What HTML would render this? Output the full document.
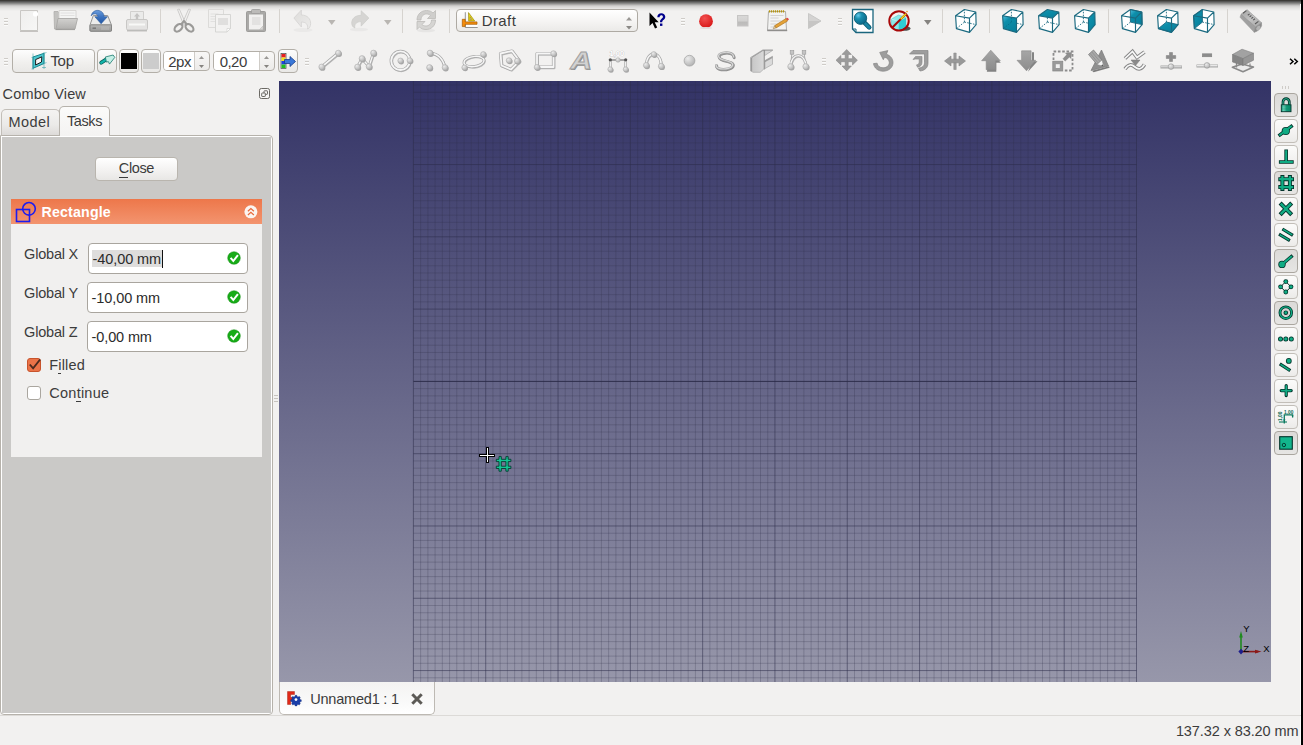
<!DOCTYPE html>
<html><head><meta charset="utf-8"><title>FreeCAD</title>
<style>
html,body{margin:0;padding:0;background:#f2f1f0;}
body{width:1303px;height:745px;overflow:hidden;font-family:"Liberation Sans",sans-serif;}
#root{position:relative;width:1303px;height:745px;overflow:hidden;background:#f2f1f0;}
.t{position:absolute;white-space:nowrap;font-family:"Liberation Sans",sans-serif;}
.a{position:absolute;}
svg{position:absolute;overflow:visible;}
.btn{position:absolute;box-sizing:border-box;border:1px solid #b3afa8;border-radius:4px;background:linear-gradient(#fdfdfd,#f0efed 60%,#e9e8e6);}
.btnc{position:absolute;box-sizing:border-box;border:1px solid #aaa69f;border-radius:4px;background:linear-gradient(#dcdad8,#e6e5e3);}
.sep{position:absolute;width:1px;background:#d6d3cf;}
.hd{position:absolute;width:4px;height:1px;background:#cfccc8;}
.inp{position:absolute;box-sizing:border-box;border:1px solid #a9a59e;border-radius:4px;background:#fff;}
</style></head><body><div id="root">
<div class="a" style="left:0;top:0px;width:1303px;height:1px;background:#3c3b37"></div><div class="a" style="left:0;top:1px;width:1303px;height:1px;background:#555553"></div><div class="a" style="left:0;top:2px;width:1303px;height:1px;background:#70706e"></div><div class="a" style="left:0;top:3px;width:1303px;height:1px;background:#8b8b89"></div><div class="a" style="left:0;top:4px;width:1303px;height:1px;background:#a9a8a6"></div><div class="a" style="left:0;top:5px;width:1303px;height:1px;background:#c5c4c2"></div><div class="a" style="left:0;top:6px;width:1303px;height:1px;background:#d6d5d3"></div><div class="a" style="left:0;top:7px;width:1303px;height:1px;background:#dfdedc"></div><div class="a" style="left:0;top:8px;width:1303px;height:1px;background:#e6e5e3"></div><div class="a" style="left:0;top:9px;width:1303px;height:1px;background:#ebeae8"></div><div class="a" style="left:0;top:10px;width:1303px;height:1px;background:#efeeed"></div>
<div class="a" style="left:1300px;top:4px;width:1px;height:741px;background:#fdfdfd"></div>
<div class="a" style="left:1301px;top:0;width:2px;height:745px;background:#000"></div>
<div class="a" style="left:279px;top:81px;width:992px;height:601px;overflow:hidden;background:linear-gradient(#333366,#9797aa)">
<svg width="992" height="601" viewBox="279 81 992 601" style="left:0;top:0"><path d="M420.63 79 V684 M427.86 79 V684 M435.09 79 V684 M442.32 79 V684 M449.55 79 V684 M456.79 79 V684 M464.02 79 V684 M471.25 79 V684 M478.48 79 V684 M492.94 79 V684 M500.17 79 V684 M507.40 79 V684 M514.63 79 V684 M521.87 79 V684 M529.10 79 V684 M536.33 79 V684 M543.56 79 V684 M550.79 79 V684 M565.25 79 V684 M572.48 79 V684 M579.71 79 V684 M586.94 79 V684 M594.17 79 V684 M601.41 79 V684 M608.64 79 V684 M615.87 79 V684 M623.10 79 V684 M637.56 79 V684 M644.79 79 V684 M652.02 79 V684 M659.25 79 V684 M666.49 79 V684 M673.72 79 V684 M680.95 79 V684 M688.18 79 V684 M695.41 79 V684 M709.87 79 V684 M717.10 79 V684 M724.33 79 V684 M731.56 79 V684 M738.79 79 V684 M746.03 79 V684 M753.26 79 V684 M760.49 79 V684 M767.72 79 V684 M782.18 79 V684 M789.41 79 V684 M796.64 79 V684 M803.87 79 V684 M811.11 79 V684 M818.34 79 V684 M825.57 79 V684 M832.80 79 V684 M840.03 79 V684 M854.49 79 V684 M861.72 79 V684 M868.95 79 V684 M876.18 79 V684 M883.41 79 V684 M890.65 79 V684 M897.88 79 V684 M905.11 79 V684 M912.34 79 V684 M926.80 79 V684 M934.03 79 V684 M941.26 79 V684 M948.49 79 V684 M955.73 79 V684 M962.96 79 V684 M970.19 79 V684 M977.42 79 V684 M984.65 79 V684 M999.11 79 V684 M1006.34 79 V684 M1013.57 79 V684 M1020.80 79 V684 M1028.03 79 V684 M1035.27 79 V684 M1042.50 79 V684 M1049.73 79 V684 M1056.96 79 V684 M1071.42 79 V684 M1078.65 79 V684 M1085.88 79 V684 M1093.11 79 V684 M1100.34 79 V684 M1107.58 79 V684 M1114.81 79 V684 M1122.04 79 V684 M1129.27 79 V684 M413.40 85.01 H1136.50 M413.40 99.47 H1136.50 M413.40 106.70 H1136.50 M413.40 113.93 H1136.50 M413.40 121.16 H1136.50 M413.40 128.38 H1136.50 M413.40 135.61 H1136.50 M413.40 142.84 H1136.50 M413.40 150.07 H1136.50 M413.40 157.30 H1136.50 M413.40 171.76 H1136.50 M413.40 178.99 H1136.50 M413.40 186.22 H1136.50 M413.40 193.45 H1136.50 M413.40 200.67 H1136.50 M413.40 207.90 H1136.50 M413.40 215.13 H1136.50 M413.40 222.36 H1136.50 M413.40 229.59 H1136.50 M413.40 244.05 H1136.50 M413.40 251.28 H1136.50 M413.40 258.51 H1136.50 M413.40 265.74 H1136.50 M413.40 272.96 H1136.50 M413.40 280.19 H1136.50 M413.40 287.42 H1136.50 M413.40 294.65 H1136.50 M413.40 301.88 H1136.50 M413.40 316.34 H1136.50 M413.40 323.57 H1136.50 M413.40 330.80 H1136.50 M413.40 338.03 H1136.50 M413.40 345.25 H1136.50 M413.40 352.48 H1136.50 M413.40 359.71 H1136.50 M413.40 366.94 H1136.50 M413.40 374.17 H1136.50 M413.40 388.63 H1136.50 M413.40 395.86 H1136.50 M413.40 403.09 H1136.50 M413.40 410.32 H1136.50 M413.40 417.54 H1136.50 M413.40 424.77 H1136.50 M413.40 432.00 H1136.50 M413.40 439.23 H1136.50 M413.40 446.46 H1136.50 M413.40 460.92 H1136.50 M413.40 468.15 H1136.50 M413.40 475.38 H1136.50 M413.40 482.61 H1136.50 M413.40 489.83 H1136.50 M413.40 497.06 H1136.50 M413.40 504.29 H1136.50 M413.40 511.52 H1136.50 M413.40 518.75 H1136.50 M413.40 533.21 H1136.50 M413.40 540.44 H1136.50 M413.40 547.67 H1136.50 M413.40 554.90 H1136.50 M413.40 562.12 H1136.50 M413.40 569.35 H1136.50 M413.40 576.58 H1136.50 M413.40 583.81 H1136.50 M413.40 591.04 H1136.50 M413.40 605.50 H1136.50 M413.40 612.73 H1136.50 M413.40 619.96 H1136.50 M413.40 627.19 H1136.50 M413.40 634.41 H1136.50 M413.40 641.64 H1136.50 M413.40 648.87 H1136.50 M413.40 656.10 H1136.50 M413.40 663.33 H1136.50 M413.40 677.79 H1136.50" stroke="#2d2d48" stroke-opacity="0.24" stroke-width="1" fill="none"/><path d="M413.40 79 V684 M485.71 79 V684 M558.02 79 V684 M630.33 79 V684 M702.64 79 V684 M774.95 79 V684 M847.26 79 V684 M919.57 79 V684 M991.88 79 V684 M1064.19 79 V684 M1136.50 79 V684 M413.40 92.24 H1136.50 M413.40 164.53 H1136.50 M413.40 236.82 H1136.50 M413.40 309.11 H1136.50 M413.40 453.69 H1136.50 M413.40 525.98 H1136.50 M413.40 598.27 H1136.50 M413.40 670.56 H1136.50" stroke="#2d2d48" stroke-opacity="0.52" stroke-width="1" fill="none"/><path d="M413.40 381.40 H1136.50" stroke="#2a2a46" stroke-opacity="0.92" stroke-width="1" fill="none"/><path d="M486 447h3v7h6v3h-6v6h-3v-6h-7v-3h7z" fill="#000"/><path d="M487 448h1v7h6v1h-6v6h-1v-6h-7v-1h7z" fill="#fff"/><g transform="translate(496.300,456.600)"><path d="M2.700 0h2.300v2.700h4.600v-2.700h2.300v2.700h2.700v2.300h-2.700v4.600h2.700v2.300h-2.700v2.700h-2.300v-2.700h-4.600v2.700h-2.300v-2.700h-2.700v-2.300h2.700v-4.600h-2.700v-2.300h2.700z M5 5v4.600h4.600v-4.600z" fill="#14c494" stroke="#053c30" stroke-width="0.900" fill-rule="evenodd"/></g><g><path d="M1241 651.5V634" stroke="#1f8a1f" stroke-width="1.6"/><path d="M1239.2 637.5L1241 631l1.800 6.500z" fill="#1f8a1f"/><path d="M1241 651.600H1258" stroke="#8b1a1a" stroke-width="1.600"/><path d="M1255 649.800l6.500 1.800-6.500 1.800z" fill="#8b1a1a"/><path d="M1241 648.800l2.600 2.800-2.600 2.800-2.600-2.800z" fill="#1c1c8c"/><g font-family="Liberation Sans" font-size="9.500" fill="#000"><text x="1243.300" y="632">Y</text><text x="1243.300" y="652">Z</text><text x="1263.200" y="652">X</text></g></g></svg>
</div>
<span class="t" style="left:2.60px;top:83.78px;font-size:14.50px;line-height:20px;letter-spacing:0.146px;color:#3c3c3c;">Combo View</span>
<svg width="12" height="12" style="left:259px;top:88px" viewBox="0 0 12 12"><rect x="0.500" y="0.500" width="10" height="10" rx="1.800" fill="#f7f6f5" stroke="#6b6964" stroke-width="1"/><rect x="5" y="2.800" width="3.500" height="3.500" rx="0.500" fill="none" stroke="#6b6964" stroke-width="1"/><rect x="2.700" y="5" width="3.600" height="3.500" rx="0.500" fill="#f7f6f5" stroke="#6b6964" stroke-width="1"/></svg>
<div class="a" style="left:0;top:135px;width:273px;height:580px;box-sizing:border-box;border:1px solid #b6b2ab;border-radius:0 4px 4px 4px;background:#fff"></div>
<div class="a" style="left:2px;top:137px;width:269px;height:576px;background:#cac9c7"></div>
<div class="a" style="left:1px;top:109px;width:59px;height:27px;box-sizing:border-box;border:1px solid #c2beb8;border-bottom:1px solid #b6b2ab;border-radius:5px 5px 0 0;background:linear-gradient(#f4f3f2,#ebeae8 60%,#dddbd9)"></div>
<div class="a" style="left:59px;top:106px;width:51px;height:30px;box-sizing:border-box;border:1px solid #b6b2ab;border-bottom:none;border-radius:5px 5px 0 0;background:linear-gradient(#fbfbfa,#f4f3f2)"></div>
<span class="t" style="left:8.60px;top:111.68px;font-size:14.50px;line-height:20px;letter-spacing:0.381px;color:#3c3c3c;">Model</span>
<span class="t" style="left:67.00px;top:111.18px;font-size:14.50px;line-height:20px;letter-spacing:-0.413px;color:#3c3c3c;">Tasks</span>
<div class="btn" style="left:95px;top:157px;width:83px;height:24px;border-color:#b9b5ae;background:linear-gradient(#ffffff,#f3f2f1 55%,#e8e7e5)"></div>
<span class="t" style="left:118.80px;top:158.48px;font-size:14.50px;line-height:20px;letter-spacing:-0.374px;color:#3c3c3c;">Close</span>
<div class="a" style="left:119px;top:177px;width:9px;height:1px;background:#3c3c3c"></div>
<div class="a" style="left:11px;top:199px;width:251px;height:258px;background:#f1f0ef"></div>
<div class="a" style="left:11px;top:199px;width:251px;height:25px;background:linear-gradient(#ed774a,#f3946f)"></div>
<svg width="24" height="24" style="left:14px;top:200px" viewBox="14 200 24 24"><rect x="16.500" y="209.500" width="13" height="12" fill="none" stroke="#1c1cf0" stroke-width="1.600"/><circle cx="29" cy="208.800" r="6.300" fill="none" stroke="#1c1cf0" stroke-width="1.600"/></svg>
<span class="t" style="left:41.50px;top:202.28px;font-size:14.20px;line-height:20px;letter-spacing:0.181px;color:#ffffff;font-weight:bold;">Rectangle</span>
<svg width="16" height="16" style="left:243px;top:204px" viewBox="243 204 16 16"><circle cx="250.900" cy="211.800" r="6.500" fill="#fbf4f0"/><path d="M247.900 211.300l3-2.700 3 2.700M247.900 215l3-2.700 3 2.700" fill="none" stroke="#e8693a" stroke-width="1.200"/></svg>
<span class="t" style="left:24.10px;top:244.28px;font-size:14.50px;line-height:20px;letter-spacing:-0.202px;color:#3c3c3c;">Global X</span>
<span class="t" style="left:24.10px;top:282.98px;font-size:14.50px;line-height:20px;letter-spacing:-0.194px;color:#3c3c3c;">Global Y</span>
<span class="t" style="left:24.10px;top:321.98px;font-size:14.50px;line-height:20px;letter-spacing:-0.200px;color:#3c3c3c;">Global Z</span>
<div class="inp" style="left:88px;top:243px;width:160px;height:31px"></div>
<div class="inp" style="left:87px;top:282px;width:161px;height:31px"></div>
<div class="inp" style="left:87px;top:321px;width:161px;height:31px"></div>
<div class="a" style="left:92px;top:250px;width:70px;height:17px;background:#dedddc"></div>
<span class="t" style="left:92.60px;top:248.58px;font-size:14.50px;line-height:20px;letter-spacing:-0.100px;color:#2b2b2b;">-40,00 mm</span>
<div class="a" style="left:162px;top:250px;width:1px;height:18px;background:#111"></div>
<span class="t" style="left:91.60px;top:287.58px;font-size:14.50px;line-height:20px;letter-spacing:-0.100px;color:#2b2b2b;">-10,00 mm</span>
<span class="t" style="left:91.60px;top:326.58px;font-size:14.50px;line-height:20px;letter-spacing:-0.130px;color:#2b2b2b;">-0,00 mm</span>
<svg width="14" height="14" style="left:227.3px;top:251.4px" viewBox="0 0 14 14"><circle cx="7" cy="7" r="6.300" fill="#18ac18"/><circle cx="7" cy="7" r="6.300" fill="none" stroke="#0f8a0f" stroke-width="0.500"/><path d="M3.600 6.900l2.700 3.100 4.600-5.900" fill="none" stroke="#fff" stroke-width="2" stroke-linejoin="miter"/></svg>
<svg width="14" height="14" style="left:227.3px;top:290.4px" viewBox="0 0 14 14"><circle cx="7" cy="7" r="6.300" fill="#18ac18"/><circle cx="7" cy="7" r="6.300" fill="none" stroke="#0f8a0f" stroke-width="0.500"/><path d="M3.600 6.900l2.700 3.100 4.600-5.900" fill="none" stroke="#fff" stroke-width="2" stroke-linejoin="miter"/></svg>
<svg width="14" height="14" style="left:227.3px;top:329.4px" viewBox="0 0 14 14"><circle cx="7" cy="7" r="6.300" fill="#18ac18"/><circle cx="7" cy="7" r="6.300" fill="none" stroke="#0f8a0f" stroke-width="0.500"/><path d="M3.600 6.900l2.700 3.100 4.600-5.900" fill="none" stroke="#fff" stroke-width="2" stroke-linejoin="miter"/></svg>
<svg width="16" height="16" style="left:26px;top:357px" viewBox="26 357 16 16"><rect x="27.500" y="358.500" width="13" height="13" rx="2.500" fill="#ea7348" stroke="#c8542c" stroke-width="1"/><path d="M29.800 364.500l3.300 3.800 7-8.800" fill="none" stroke="#4a2a1e" stroke-width="1.900"/></svg>
<svg width="16" height="16" style="left:26px;top:385px" viewBox="26 385 16 16"><rect x="27.500" y="386.500" width="13" height="13" rx="2.500" fill="#fff" stroke="#aaa69f" stroke-width="1"/></svg>
<span class="t" style="left:49.30px;top:354.78px;font-size:14.50px;line-height:20px;letter-spacing:0.175px;color:#3c3c3c;">Filled</span>
<div class="a" style="left:58px;top:373px;width:3px;height:1px;background:#3c3c3c"></div>
<span class="t" style="left:49.30px;top:382.58px;font-size:14.50px;line-height:20px;letter-spacing:0.244px;color:#3c3c3c;">Continue</span>
<div class="a" style="left:76px;top:401px;width:5px;height:1px;background:#3c3c3c"></div>
<div class="a" style="left:274px;top:395px;width:4px;height:1px;background:#c6c3be"></div><div class="a" style="left:274px;top:398px;width:4px;height:1px;background:#c6c3be"></div><div class="a" style="left:274px;top:401px;width:4px;height:1px;background:#c6c3be"></div>
<div class="hd" style="left:4px;top:18px"></div><div class="hd" style="left:4px;top:19px;background:#fbfbfa"></div><div class="hd" style="left:4px;top:21px"></div><div class="hd" style="left:4px;top:22px;background:#fbfbfa"></div><div class="hd" style="left:4px;top:24px"></div><div class="hd" style="left:4px;top:25px;background:#fbfbfa"></div>
<svg width="24" height="26" viewBox="0 0 24 26" style="left:18px;top:8px"><defs><linearGradient id="gnew" x1="0" y1="0" x2="1" y2="1"><stop offset="0" stop-color="#efeeed"/><stop offset="1" stop-color="#f7f7f6"/></linearGradient></defs><path d="M2.500 2.500h17v20h-17z" fill="url(#gnew)" stroke="#c9c7c4" stroke-width="1"/><path d="M2 23.300h18" stroke="#b9b7b4" stroke-width="1"/><circle cx="17.500" cy="6" r="2.600" fill="#fff"/></svg>
<svg width="28" height="24" viewBox="0 0 28 24" style="left:51px;top:8px"><path d="M3 3.500h4l1 1.500h3v16h-7.500z" fill="#c2c1bf" stroke="#aeadab" stroke-width="0.800"/><path d="M8 2.500h17v9h-17z" fill="#f4f4f3" stroke="#cfcecc" stroke-width="0.800"/><path d="M9.500 5h14M9.500 7.500h14" stroke="#dcdbd9" stroke-width="0.800"/><defs><linearGradient id="gfo" x1="0" y1="0" x2="0" y2="1"><stop offset="0" stop-color="#d2d1cf"/><stop offset="1" stop-color="#b2b1af"/></linearGradient></defs><path d="M7 10.500h19.500l-2.500 10.500h-19z" fill="url(#gfo)" stroke="#a9a8a6" stroke-width="0.900"/><path d="M4.500 21.600h19.500" stroke="#9c9b99" stroke-width="1"/></svg>
<svg width="26" height="26" viewBox="0 0 26 26" style="left:88px;top:8px"><defs><linearGradient id="gsv" x1="0" y1="0" x2="0" y2="1"><stop offset="0" stop-color="#6a9cdc"/><stop offset="0.500" stop-color="#3a72c0"/><stop offset="1" stop-color="#2458a4"/></linearGradient><linearGradient id="gsd" x1="0" y1="0" x2="0" y2="1"><stop offset="0" stop-color="#b6b6b5"/><stop offset="1" stop-color="#9a9a99"/></linearGradient></defs><path d="M5.300 7.500h14.400l3.800 9.500v5.800h-21.500v-5.800z" fill="#dcdcdb" stroke="#969695" stroke-width="1"/><path d="M6 8.500h13l3.200 8.200h-19.400z" fill="#ececeb"/><rect x="2" y="16.800" width="21.500" height="6.500" rx="1" fill="url(#gsd)" stroke="#858584" stroke-width="1"/><path d="M4.500 20.200h3.500" stroke="#777776" stroke-width="1.500"/><path d="M14 18.500v3.500M16 18.500v3.500M18 18.500v3.500M20 18.500v3.500" stroke="#c4c4c3" stroke-width="0.700"/><path d="M3.200 7.800C4 3.500 8 1.800 11 2.500C14.500 3.300 16 6 16.200 8.700L19.400 8.700L13.100 15.800L6.800 8.700L10 8.700C9.800 7 8.500 5.800 7 5.800C5.500 5.800 4 6.600 3.200 7.800Z" fill="url(#gsv)" stroke="#2c5a9c" stroke-width="0.600" stroke-linejoin="round"/></svg>
<svg width="26" height="24" viewBox="0 0 26 24" style="left:124px;top:9px"><path d="M6.500 2.500h13v9h-13z" fill="#ebebea" stroke="#cdcccb" stroke-width="0.900"/><path d="M13 4l3 3.500h-1.800v3h-2.400v-3h-1.800z" fill="#c4c3c2"/><path d="M4 10.500h18q1.500 0 1.500 1.500v7.500q0 1.500-1.500 1.500h-18q-1.500 0-1.500-1.500v-7.500q0-1.500 1.500-1.500z" fill="#e4e3e2" stroke="#c4c3c1" stroke-width="0.900"/><path d="M5 15.500h16" stroke="#f8f8f7" stroke-width="2"/><path d="M3 21.800h20" stroke="#b5b4b2" stroke-width="1.200"/></svg>
<div class="sep" style="left:160px;top:9px;height:24px"></div>
<svg width="24" height="26" viewBox="0 0 24 26" style="left:172px;top:8px"><path d="M5.500 1.500l1.800-.5 6.200 14-2 1.500z" fill="#f1f0ef" stroke="#c4c3c1" stroke-width="0.800"/><path d="M18.500 1.500l-1.800-.5-6.200 14 2 1.500z" fill="#f1f0ef" stroke="#c4c3c1" stroke-width="0.800"/><ellipse cx="6.500" cy="19.800" rx="2.900" ry="4.600" transform="rotate(48 6.500 19.800)" fill="none" stroke="#9b9a98" stroke-width="2.200"/><ellipse cx="17.500" cy="19.800" rx="2.900" ry="4.600" transform="rotate(-48 17.500 19.800)" fill="none" stroke="#9b9a98" stroke-width="2.200"/><path d="M9 16.500l3-3.500 3 3.500" fill="none" stroke="#9b9a98" stroke-width="2"/></svg>
<svg width="26" height="26" viewBox="0 0 26 26" style="left:207px;top:8px"><path d="M1.500 1.500h15v18h-15z" fill="#f1f0ef" stroke="#d9d8d6" stroke-width="0.900"/><path d="M3.500 6h8M3.500 8.500h8M3.500 11h8M3.500 13.500h8" stroke="#dddcdb" stroke-width="0.800"/><path d="M8.500 6.500h15v14l-3.500 3.500h-11.500z" fill="#f3f2f1" stroke="#d3d2d0" stroke-width="0.900"/><rect x="11" y="10" width="10" height="7" fill="#e0dfde"/><path d="M23.500 20.500h-3.500v3.500z" fill="#fff" stroke="#d3d2d0" stroke-width="0.700"/></svg>
<svg width="24" height="26" viewBox="0 0 24 26" style="left:244px;top:8px"><rect x="2.500" y="3.500" width="19" height="20" rx="1" fill="#aaa9a7" stroke="#9d9c9a" stroke-width="1"/><rect x="7.500" y="1.500" width="9" height="4" rx="1" fill="#bcbbb9" stroke="#9d9c9a" stroke-width="0.800"/><path d="M5 6.500h14v15h-14z" fill="#f1f0ef"/><rect x="8" y="9" width="8.500" height="8" fill="#e3e2e1"/><path d="M19 18l-3.500 3.500h3.500z" fill="#d8d7d5" stroke="#b8b7b5" stroke-width="0.500"/></svg>
<div class="sep" style="left:279px;top:9px;height:24px"></div>
<svg width="24" height="26" viewBox="0 0 24 26" style="left:291px;top:8px"><defs><linearGradient id="gun" x1="0" y1="0" x2="1" y2="1"><stop offset="0" stop-color="#dedddb"/><stop offset="1" stop-color="#ecebea"/></linearGradient></defs><ellipse cx="12" cy="22" rx="9.500" ry="2" fill="#eae9e8"/><path transform="translate(2.900,0) scale(0.880,1) translate(-2.500,0)" d="M2.500 10l8.500-8v5c7 0 10.500 4 10.500 8.500 0 3-1.500 5-3.500 5.500 1-4.500-2-7-7-7v5z" fill="url(#gun)" stroke="#d3d2d0" stroke-width="0.800"/></svg>
<svg width="7.5" height="5" viewBox="0 0 7.5 5" style="left:327.55px;top:20px"><path d="M0 0H7.5 L3.75 5z" fill="#b9b6b2"/></svg>
<svg width="24" height="26" viewBox="0 0 24 26" style="left:348px;top:8px"><ellipse cx="11" cy="21.500" rx="9" ry="1.800" fill="#e9e8e7"/><path transform="translate(1.500,1) scale(0.900)" d="M21.500 10l-8.500-8v5c-7 0-10.500 4-10.500 8.500 0 3 1.500 5 3.500 5.500-1-4.500 2-7 7-7v5z" fill="#d6d5d3" stroke="#cccbc9" stroke-width="0.800"/></svg>
<svg width="7.5" height="5" viewBox="0 0 7.5 5" style="left:383.75px;top:20px"><path d="M0 0H7.5 L3.75 5z" fill="#b9b6b2"/></svg>
<div class="sep" style="left:402px;top:9px;height:24px"></div>
<svg width="24" height="26" viewBox="0 0 24 26" style="left:414px;top:8px"><ellipse cx="12" cy="22.500" rx="9" ry="1.800" fill="#e6e5e4"/><path d="M3 12c0-6 4.500-9.500 9.500-9.500 3 0 5 1 6.500 2.500l2.500-2.500v8h-8l3-3c-1-1-2.500-1.500-4-1.500-3 0-5.500 2.500-5.500 6z" fill="#cfcecc" stroke="#bcbbb9" stroke-width="0.800"/><path d="M21.500 12c0 6-4.500 9.500-9.500 9.500-3 0-5-1-6.500-2.500l-2.500 2.500v-8h8l-3 3c1 1 2.500 1.500 4 1.500 3 0 5.500-2.500 5.500-6z" fill="#d6d5d3" stroke="#bcbbb9" stroke-width="0.800"/></svg>
<div class="sep" style="left:449px;top:9px;height:24px"></div>
<div class="btn" style="left:456px;top:9px;width:182px;height:23px;border-color:#aeaaa3;background:linear-gradient(#ffffff,#f6f5f4 50%,#ebeae8)"></div>
<svg width="18" height="18" viewBox="0 0 18 18" style="left:461px;top:11px"><path d="M4.300 1.200V16.500H16.700" fill="none" stroke="#8a8a88" stroke-width="0.900"/><path d="M5 13.600H16.700V15.800H5z" fill="#fff"/><path d="M7.500 1.600L13.700 10H7.700z" fill="#ecd818" stroke="#9a8a10" stroke-width="0.700" stroke-linejoin="round"/><path d="M9 5.800l2.200 3h-2.200z" fill="#c8c0a0" stroke="#9a8a10" stroke-width="0.500"/><path d="M1.300 8.300h2.900v2.600h11.800v2.400h-11.800v2.300h-2.900z" fill="#f48c0c" stroke="#a85c00" stroke-width="0.700" stroke-linejoin="round"/></svg>
<span class="t" style="left:481.70px;top:9.80px;font-size:15.00px;line-height:21px;letter-spacing:0.419px;color:#3c3c3c;">Draft</span>
<svg width="6" height="3.5" viewBox="0 0 6 3.5" style="left:625.5px;top:17px"><path d="M0 3.500L3 0 6 3.500z" fill="#9a9895"/></svg>
<svg width="6" height="3.5" viewBox="0 0 6 3.5" style="left:625.5px;top:25.5px"><path d="M0 0L3 3.500 6 0z" fill="#8a8885"/></svg>
<svg width="20" height="20" viewBox="0 0 20 20" style="left:648px;top:11px"><path d="M1.500 1.500v13.500l3-3 2.500 5.500 2.200-1-2.500-5.200h4z" fill="#000"/><path d="M9.300 6.200c0-2.500 1.800-4 4-4s4 1.500 4 3.600c0 2-1.300 2.700-2.300 3.500-.6.500-.7 1-.7 2h-2.300c0-1.700.3-2.600 1.400-3.400.9-.7 1.500-1.100 1.500-2.100 0-.9-.6-1.600-1.600-1.600s-1.700.8-1.700 2z" fill="#00008c"/><rect x="12" y="12.500" width="2.400" height="2.400" fill="#00008c"/></svg>
<div class="hd" style="left:681px;top:18px"></div><div class="hd" style="left:681px;top:19px;background:#fbfbfa"></div><div class="hd" style="left:681px;top:21px"></div><div class="hd" style="left:681px;top:22px;background:#fbfbfa"></div><div class="hd" style="left:681px;top:24px"></div><div class="hd" style="left:681px;top:25px;background:#fbfbfa"></div>
<svg width="16" height="16" viewBox="0 0 16 16" style="left:698px;top:13px"><defs><radialGradient id="grec" cx="0.400" cy="0.300" r="0.700"><stop offset="0" stop-color="#f25050"/><stop offset="1" stop-color="#d81818"/></radialGradient></defs><circle cx="8" cy="8.200" r="6.900" fill="url(#grec)"/><ellipse cx="8" cy="15" rx="6" ry="1" fill="#e4dcdc"/></svg>
<svg width="14" height="14" viewBox="0 0 14 14" style="left:736px;top:14px"><defs><linearGradient id="gst" x1="0" y1="0" x2="0" y2="1"><stop offset="0" stop-color="#d9d8d7"/><stop offset="0.550" stop-color="#d2d1d0"/><stop offset="0.600" stop-color="#bbbab9"/><stop offset="1" stop-color="#c2c1c0"/></linearGradient></defs><rect x="1.500" y="1.500" width="10.500" height="10.500" fill="url(#gst)" stroke="#c6c5c4" stroke-width="1"/></svg>
<svg width="24" height="24" viewBox="0 0 24 24" style="left:766px;top:9px"><path d="M2.500 2.500h17l1 18.500h-19z" fill="#f3f3f2" stroke="#a7a6a4" stroke-width="0.900"/><path d="M1.200 21.500h20" stroke="#8f8e8c" stroke-width="1.400"/><path d="M4.500 6.500h13M4.500 9h8M4.500 12h11M4.500 15h9M4.500 18h6" stroke="#cfcecd" stroke-width="0.900"/><path d="M3.500 1.200v2.300M5.500 1.200v2.300M7.500 1.200v2.300M9.500 1.200v2.300M11.500 1.200v2.300M13.500 1.200v2.300M15.500 1.200v2.300M17.500 1.200v2.300" stroke="#b8960c" stroke-width="1.200"/><path d="M8.500 16.800l11.500-7.300 1.600 2.500-11.600 7z" fill="#e4a238" stroke="#a56a14" stroke-width="0.600"/><path d="M8.500 16.800l1.500 2.200-2.900.9z" fill="#e9cfa0" stroke="#8c6a34" stroke-width="0.400"/><path d="M20 9.500l1.200-.8q1.500.4 1.700 2l-1.300.8z" fill="#e04040"/></svg>
<svg width="16" height="18" viewBox="0 0 16 18" style="left:807px;top:12px"><path d="M1.500 1.500v15l12.500-7.500z" fill="#d4d3d2" stroke="#c2c1c0" stroke-width="0.800"/><path d="M1.500 9v7.500l12.500-7.500z" fill="#c6c5c4"/></svg>
<div class="hd" style="left:838px;top:18px"></div><div class="hd" style="left:838px;top:19px;background:#fbfbfa"></div><div class="hd" style="left:838px;top:21px"></div><div class="hd" style="left:838px;top:22px;background:#fbfbfa"></div><div class="hd" style="left:838px;top:24px"></div><div class="hd" style="left:838px;top:25px;background:#fbfbfa"></div>
<svg width="24" height="26" viewBox="0 0 24 26" style="left:851px;top:8px"><defs><radialGradient id="gzf" cx="0.320" cy="0.280" r="0.800"><stop offset="0" stop-color="#62c8ea"/><stop offset="0.350" stop-color="#1890b0"/><stop offset="1" stop-color="#0a6484"/></radialGradient></defs><path d="M1.500 1.500h20.500v23h-17l-3.500-3.500z" fill="#fff" stroke="#1a667e" stroke-width="1.300"/><path d="M1.500 21h3.500v3.500" fill="none" stroke="#1a667e" stroke-width="1"/><path d="M13.500 14.700l4.700 4.700" stroke="#0d5c74" stroke-width="4.600" stroke-linecap="round"/><path d="M13.500 14.700l4.700 4.700" stroke="#1a86a4" stroke-width="2.800" stroke-linecap="round"/><circle cx="9.500" cy="10.200" r="6.200" fill="url(#gzf)" stroke="#0d5c74" stroke-width="0.900"/></svg>
<svg width="24" height="24" viewBox="0 0 24 24" style="left:887px;top:9px"><ellipse cx="17" cy="19.500" rx="6.500" ry="2.300" fill="#333" opacity="0.850"/><path d="M4.500 10l7-4 7.500 2.500v9l-7.500 4-7-3.500z" fill="#8ae8e8" stroke="#4ac0c8" stroke-width="0.500"/><path d="M4.500 10l7 2.800 7.500-4.300M11.500 12.800v8.700" fill="none" stroke="#c8f4f4" stroke-width="0.700"/><path d="M11.500 12.800l7.500-4.300v9l-7.500 4z" fill="#30ccd4"/><circle cx="12" cy="11.900" r="9.700" fill="none" stroke="#a80808" stroke-width="2"/><path d="M5.100 18.800L18.900 5" stroke="#a80808" stroke-width="2"/><path d="M13.200 9.600l5.300-5.300 1 1-5.200 5.400z" fill="#f2dc20" stroke="#b09808" stroke-width="0.300"/><circle cx="20" cy="2.600" r="0.800" fill="#e89020"/></svg>
<svg width="7.5" height="5" viewBox="0 0 7.5 5" style="left:923.95px;top:19.9px"><path d="M0 0H7.5 L3.75 5z" fill="#858380"/></svg>
<div class="sep" style="left:942px;top:9px;height:24px"></div>
<svg width="24" height="36" viewBox="0 0 24 36" style="left:955px;top:0px"><defs><linearGradient id="gc0" x1="0" y1="0" x2="0.700" y2="1"><stop offset="0" stop-color="#4fc0e0"/><stop offset="0.350" stop-color="#0d8eaa"/><stop offset="1" stop-color="#07809c"/></linearGradient></defs><path d="M0.6 15.8 L9.4 9.5 L20.8 12.0 L21.1 24.6 L14.5 32.4 L1.4 28.6z" fill="#fff"/><path d="M9.4 22.1 L9.4 9.5 M9.4 22.1 L1.4 28.6 M9.4 22.1 L21.1 24.6" fill="none" stroke="#1b6a80" stroke-width="0.900" stroke-dasharray="1.6 1.3"/><path d="M0.6 15.8 L9.4 9.5 L20.8 12.0 L21.1 24.6 L14.5 32.4 L1.4 28.6z M0.6 15.8 L14.5 18.1 M14.5 18.1 L20.8 12.0 M14.5 18.1 L14.5 32.4" fill="none" stroke="#1b6a80" stroke-width="1.150" stroke-linejoin="round"/></svg>
<div class="sep" style="left:989px;top:9px;height:24px"></div>
<svg width="24" height="36" viewBox="0 0 24 36" style="left:1001.8px;top:0px"><defs><linearGradient id="gc1" x1="0" y1="0" x2="0.700" y2="1"><stop offset="0" stop-color="#4fc0e0"/><stop offset="0.350" stop-color="#0d8eaa"/><stop offset="1" stop-color="#07809c"/></linearGradient></defs><path d="M0.6 15.8 L9.4 9.5 L20.8 12.0 L21.1 24.6 L14.5 32.4 L1.4 28.6z" fill="#fff"/><path d="M9.4 22.1 L9.4 9.5 M9.4 22.1 L21.1 24.6" fill="none" stroke="#1b6a80" stroke-width="0.900" stroke-dasharray="1.6 1.3"/><path d="M0.6 15.8 L1.4 28.6 L14.5 32.4 L14.5 18.1z" fill="url(#gc1)"/><path d="M9.4 22.1 L1.4 28.6 M9.4 22.1L9.4 17.6" fill="none" stroke="#0a5a70" stroke-width="0.700" stroke-dasharray="1.6 1.3" opacity="0.700"/><path d="M0.6 15.8 L9.4 9.5 L20.8 12.0 L21.1 24.6 L14.5 32.4 L1.4 28.6z M0.6 15.8 L14.5 18.1 M14.5 18.1 L20.8 12.0 M14.5 18.1 L14.5 32.4" fill="none" stroke="#1b6a80" stroke-width="1.150" stroke-linejoin="round"/></svg>
<svg width="24" height="36" viewBox="0 0 24 36" style="left:1037.8px;top:0px"><defs><linearGradient id="gc2" x1="0" y1="0" x2="0.700" y2="1"><stop offset="0" stop-color="#4fc0e0"/><stop offset="0.350" stop-color="#0d8eaa"/><stop offset="1" stop-color="#07809c"/></linearGradient></defs><path d="M0.6 15.8 L9.4 9.5 L20.8 12.0 L21.1 24.6 L14.5 32.4 L1.4 28.6z" fill="#fff"/><path d="M9.4 22.1 L9.4 9.5 M9.4 22.1 L1.4 28.6 M9.4 22.1 L21.1 24.6" fill="none" stroke="#1b6a80" stroke-width="0.900" stroke-dasharray="1.6 1.3"/><path d="M0.6 15.8 L9.4 9.5 L20.8 12.0 L14.5 18.1z" fill="url(#gc2)"/><path d="M0.6 15.8 L9.4 9.5 L20.8 12.0 L21.1 24.6 L14.5 32.4 L1.4 28.6z M0.6 15.8 L14.5 18.1 M14.5 18.1 L20.8 12.0 M14.5 18.1 L14.5 32.4" fill="none" stroke="#1b6a80" stroke-width="1.150" stroke-linejoin="round"/></svg>
<svg width="24" height="36" viewBox="0 0 24 36" style="left:1073.8px;top:0px"><defs><linearGradient id="gc3" x1="0" y1="0" x2="0.700" y2="1"><stop offset="0" stop-color="#4fc0e0"/><stop offset="0.350" stop-color="#0d8eaa"/><stop offset="1" stop-color="#07809c"/></linearGradient></defs><path d="M0.6 15.8 L9.4 9.5 L20.8 12.0 L21.1 24.6 L14.5 32.4 L1.4 28.6z" fill="#fff"/><path d="M9.4 22.1 L9.4 9.5 M9.4 22.1 L1.4 28.6 M9.4 22.1 L21.1 24.6" fill="none" stroke="#1b6a80" stroke-width="0.900" stroke-dasharray="1.6 1.3"/><path d="M14.5 18.1 L20.8 12.0 L21.1 24.6 L14.5 32.4z" fill="url(#gc3)"/><path d="M0.6 15.8 L9.4 9.5 L20.8 12.0 L21.1 24.6 L14.5 32.4 L1.4 28.6z M0.6 15.8 L14.5 18.1 M14.5 18.1 L20.8 12.0 M14.5 18.1 L14.5 32.4" fill="none" stroke="#1b6a80" stroke-width="1.150" stroke-linejoin="round"/></svg>
<div class="sep" style="left:1108px;top:9px;height:24px"></div>
<svg width="24" height="36" viewBox="0 0 24 36" style="left:1120.5px;top:0px"><defs><linearGradient id="gc4" x1="0" y1="0" x2="0.700" y2="1"><stop offset="0" stop-color="#4fc0e0"/><stop offset="0.350" stop-color="#0d8eaa"/><stop offset="1" stop-color="#07809c"/></linearGradient></defs><path d="M0.6 15.8 L9.4 9.5 L20.8 12.0 L21.1 24.6 L14.5 32.4 L1.4 28.6z" fill="#fff"/><path d="M9.4 9.5 L20.8 12.0 L21.1 24.6 L9.4 22.1z" fill="url(#gc4)" stroke="#1b6a80" stroke-width="0.900" stroke-linejoin="round"/><path d="M9.4 22.1 L1.4 28.6" fill="none" stroke="#1b6a80" stroke-width="0.900" stroke-dasharray="1.6 1.3"/><path d="M0.6 15.8 L9.4 9.5 L20.8 12.0 L21.1 24.6 L14.5 32.4 L1.4 28.6z M0.6 15.8 L14.5 18.1 M14.5 18.1 L20.8 12.0 M14.5 18.1 L14.5 32.4" fill="none" stroke="#1b6a80" stroke-width="1.150" stroke-linejoin="round"/></svg>
<svg width="24" height="36" viewBox="0 0 24 36" style="left:1156.5px;top:0px"><defs><linearGradient id="gc5" x1="0" y1="0" x2="0.700" y2="1"><stop offset="0" stop-color="#4fc0e0"/><stop offset="0.350" stop-color="#0d8eaa"/><stop offset="1" stop-color="#07809c"/></linearGradient></defs><path d="M0.6 15.8 L9.4 9.5 L20.8 12.0 L21.1 24.6 L14.5 32.4 L1.4 28.6z" fill="#fff"/><path d="M1.4 28.6 L14.5 32.4 L21.1 24.6 L9.4 22.1z" fill="url(#gc5)" stroke="#1b6a80" stroke-width="0.900" stroke-linejoin="round"/><path d="M9.4 22.1 L9.4 9.5" fill="none" stroke="#1b6a80" stroke-width="0.900" stroke-dasharray="1.6 1.3"/><path d="M0.6 15.8 L9.4 9.5 L20.8 12.0 L21.1 24.6 L14.5 32.4 L1.4 28.6z M0.6 15.8 L14.5 18.1 M14.5 18.1 L20.8 12.0 M14.5 18.1 L14.5 32.4" fill="none" stroke="#1b6a80" stroke-width="1.150" stroke-linejoin="round"/></svg>
<svg width="24" height="36" viewBox="0 0 24 36" style="left:1192.5px;top:0px"><defs><linearGradient id="gc6" x1="0" y1="0" x2="0.700" y2="1"><stop offset="0" stop-color="#4fc0e0"/><stop offset="0.350" stop-color="#0d8eaa"/><stop offset="1" stop-color="#07809c"/></linearGradient></defs><path d="M0.6 15.8 L9.4 9.5 L20.8 12.0 L21.1 24.6 L14.5 32.4 L1.4 28.6z" fill="#fff"/><path d="M0.6 15.8 L9.4 9.5 L9.4 22.1 L1.4 28.6z" fill="url(#gc6)" stroke="#1b6a80" stroke-width="0.900" stroke-linejoin="round"/><path d="M9.4 22.1 L21.1 24.6" fill="none" stroke="#1b6a80" stroke-width="0.900" stroke-dasharray="1.6 1.3"/><path d="M0.6 15.8 L9.4 9.5 L20.8 12.0 L21.1 24.6 L14.5 32.4 L1.4 28.6z M0.6 15.8 L14.5 18.1 M14.5 18.1 L20.8 12.0 M14.5 18.1 L14.5 32.4" fill="none" stroke="#1b6a80" stroke-width="1.150" stroke-linejoin="round"/></svg>
<div class="sep" style="left:1227px;top:9px;height:24px"></div>
<svg width="26" height="26" viewBox="0 0 26 26" style="left:1238px;top:8px"><defs><linearGradient id="gru" x1="0" y1="0" x2="1" y2="1"><stop offset="0" stop-color="#a2a2a2"/><stop offset="0.500" stop-color="#c2c2c2"/><stop offset="1" stop-color="#a8a8a8"/></linearGradient></defs><path d="M3 6.300L17.600 18.800L16.200 24.300L2 9.200z" fill="#a0a0a0" stroke="#989898" stroke-width="0.500"/><path d="M17.600 18.800L23.500 14.700L23.600 17.800Q22 22.500 16.200 24.300z" fill="#8c8c8c" stroke="#858585" stroke-width="0.500"/><ellipse cx="20.300" cy="20" rx="1.700" ry="2.600" transform="rotate(40 20.300 20)" fill="#b4b4b4"/><path d="M9.100 1.700L23.500 14.700L17.600 18.800L3 6.300z" fill="url(#gru)" stroke="#909090" stroke-width="0.600"/><path d="M8.400 2.600l-3.400 2.600M11.600 5.900l-1.800 1.400M13.400 7.500l-1.800 1.400M15.200 9.100l-1.800 1.400M17 10.700l-1.800 1.400M20.400 13.400l-3.400 2.600" stroke="#5a5a5a" stroke-width="1.100"/></svg>
<div class="hd" style="left:4px;top:58px"></div><div class="hd" style="left:4px;top:59px;background:#fbfbfa"></div><div class="hd" style="left:4px;top:61px"></div><div class="hd" style="left:4px;top:62px;background:#fbfbfa"></div><div class="hd" style="left:4px;top:64px"></div><div class="hd" style="left:4px;top:65px;background:#fbfbfa"></div>
<div class="btn" style="left:12px;top:49px;width:83px;height:24px"></div>
<svg width="17" height="19" viewBox="0 0 17 19" style="left:31px;top:52px"><path d="M2 5L13 1.300L13 11.500L2 16.300z" fill="#4cc6ce" stroke="#16858d" stroke-width="1"/><path d="M4.600 7.600L10.800 4.800L10.500 10L4.600 13z" fill="#f6f6f6" stroke="#1a1a1a" stroke-width="1"/><path d="M2 1.500v16.500M13 0v17M0.500 5.500l2-.7M12 1.700l3.500-1.200M12 11.900l3.500-1.300M0.500 17l2-.9M11 15.500h4" stroke="#2a9aa2" stroke-width="0.600" opacity="0.850"/></svg>
<span class="t" style="left:50.40px;top:50.10px;font-size:15.00px;line-height:21px;letter-spacing:-0.295px;color:#3c3c3c;">Top</span>
<div class="btn" style="left:97px;top:49px;width:20px;height:24px"></div>
<svg width="17" height="14" viewBox="0 0 17 14" style="left:99px;top:54px"><path d="M2.200 8.700l5.500-3.600" stroke="#086058" stroke-width="3.800" stroke-linecap="round"/><path d="M2.200 8.700l5.500-3.600" stroke="#12b4aa" stroke-width="2.300" stroke-linecap="round"/><path d="M6.300 3l7.800-2 1.700 2.400-5.300 6.700-1.200-2.600-1.800.700z" fill="#c4f0e6" stroke="#1a7a70" stroke-width="0.800" stroke-linejoin="round"/></svg>
<div class="btn" style="left:119px;top:49px;width:20px;height:24px"></div><div class="a" style="left:121px;top:53px;width:16px;height:16px;background:#000"></div>
<div class="btn" style="left:141px;top:49px;width:20px;height:24px"></div><div class="a" style="left:143px;top:53px;width:16px;height:16px;background:#cccccc"></div>
<div class="inp" style="left:163px;top:51px;width:47px;height:20px;border-color:#b3afa8;background:linear-gradient(#f8f7f6,#ecebe9)"></div><div class="a" style="left:164px;top:52px;width:30px;height:18px;background:#fff;border-radius:3px 0 0 3px;border-right:1px solid #cfccc7"></div><svg width="5" height="3" viewBox="0 0 5 3" style="left:199px;top:56px"><path d="M0 3L2.500 0 5 3z" fill="#9a9895"/></svg><svg width="5" height="3" viewBox="0 0 5 3" style="left:199px;top:64.5px"><path d="M0 0L2.500 3 5 0z" fill="#85837f"/></svg>
<span class="t" style="left:168.20px;top:50.80px;font-size:15.00px;line-height:21px;letter-spacing:-0.462px;color:#3c3c3c;">2px</span>
<div class="inp" style="left:213px;top:51px;width:62px;height:20px;border-color:#b3afa8;background:linear-gradient(#f8f7f6,#ecebe9)"></div><div class="a" style="left:214px;top:52px;width:45px;height:18px;background:#fff;border-radius:3px 0 0 3px;border-right:1px solid #cfccc7"></div><svg width="5" height="3" viewBox="0 0 5 3" style="left:264px;top:56px"><path d="M0 3L2.500 0 5 3z" fill="#9a9895"/></svg><svg width="5" height="3" viewBox="0 0 5 3" style="left:264px;top:64.5px"><path d="M0 0L2.500 3 5 0z" fill="#85837f"/></svg>
<span class="t" style="left:219.70px;top:50.80px;font-size:15.00px;line-height:21px;letter-spacing:-0.549px;color:#3c3c3c;">0,20</span>
<div class="btn" style="left:278px;top:49px;width:20px;height:24px"></div>
<svg width="16" height="16" viewBox="0 0 16 16" style="left:280px;top:53px"><rect x="1" y="0.500" width="5" height="15" fill="#f0f0f0" stroke="#444" stroke-width="0.700"/><rect x="1.500" y="1" width="4" height="3.500" fill="#e82020"/><rect x="1.500" y="4.500" width="4" height="3.500" fill="#f0e020"/><rect x="1.500" y="8" width="4" height="3.500" fill="#2040e0"/><rect x="1.500" y="11.500" width="4" height="3.500" fill="#20c020"/><path d="M4.500 6.500h5.500v-3l5.500 5-5.500 5v-3h-5.500z" fill="#3a78d8" stroke="#1a3e8a" stroke-width="0.800"/></svg>
<div class="hd" style="left:305px;top:58px"></div><div class="hd" style="left:305px;top:59px;background:#fbfbfa"></div><div class="hd" style="left:305px;top:61px"></div><div class="hd" style="left:305px;top:62px;background:#fbfbfa"></div><div class="hd" style="left:305px;top:64px"></div><div class="hd" style="left:305px;top:65px;background:#fbfbfa"></div>
<svg width="1" height="1" viewBox="0 0 1 1" style="left:0px;top:0px"><defs><radialGradient id="gb" cx="0.350" cy="0.300" r="0.800"><stop offset="0" stop-color="#ececec"/><stop offset="0.600" stop-color="#c6c6c6"/><stop offset="1" stop-color="#adadad"/></radialGradient><linearGradient id="gg" x1="0" y1="0" x2="1" y2="1"><stop offset="0" stop-color="#c9c9c9"/><stop offset="1" stop-color="#9d9d9d"/></linearGradient><linearGradient id="gd" x1="0" y1="0" x2="0" y2="1"><stop offset="0" stop-color="#a6a6a6"/><stop offset="1" stop-color="#8c8c8c"/></linearGradient></defs></svg>
<svg width="1303" height="82" viewBox="0 0 1303 82" style="left:0px;top:0px"><path d="M321.700 66.900L338.300 53.100" fill="none" stroke="#b9b9b9" stroke-width="2.6" stroke-linecap="round" stroke-linejoin="round" transform="translate(0.700,0.900)"/><path d="M321.700 66.900L338.300 53.100" fill="none" stroke="#a9a9a9" stroke-width="3.2" stroke-linecap="round" stroke-linejoin="round"/><path d="M321.700 66.900L338.300 53.100" fill="none" stroke="#f6f6f6" stroke-width="1.8" stroke-linecap="round" stroke-linejoin="round"/><circle cx="322.5" cy="67.9" r="2.9" fill="#a6a6a6"/><circle cx="321.7" cy="66.9" r="2.9" fill="url(#gb)" stroke="#a8a8a8" stroke-width="0.500"/><circle cx="339.1" cy="54.1" r="2.9" fill="#a6a6a6"/><circle cx="338.3" cy="53.1" r="2.9" fill="url(#gb)" stroke="#a8a8a8" stroke-width="0.500"/><path d="M357.500 67L362 58.500L369 66.500L373.500 53" fill="none" stroke="#b9b9b9" stroke-width="2.2" stroke-linecap="round" stroke-linejoin="round" transform="translate(0.700,0.900)"/><path d="M357.500 67L362 58.500L369 66.500L373.500 53" fill="none" stroke="#a9a9a9" stroke-width="2.8" stroke-linecap="round" stroke-linejoin="round"/><path d="M357.500 67L362 58.500L369 66.500L373.500 53" fill="none" stroke="#f6f6f6" stroke-width="1.4" stroke-linecap="round" stroke-linejoin="round"/><circle cx="358.3" cy="68.0" r="2.9" fill="#a6a6a6"/><circle cx="357.5" cy="67.0" r="2.9" fill="url(#gb)" stroke="#a8a8a8" stroke-width="0.500"/><circle cx="362.8" cy="59.5" r="2.9" fill="#a6a6a6"/><circle cx="362.0" cy="58.5" r="2.9" fill="url(#gb)" stroke="#a8a8a8" stroke-width="0.500"/><circle cx="369.8" cy="67.5" r="2.9" fill="#a6a6a6"/><circle cx="369.0" cy="66.5" r="2.9" fill="url(#gb)" stroke="#a8a8a8" stroke-width="0.500"/><circle cx="374.3" cy="54.0" r="2.9" fill="#a6a6a6"/><circle cx="373.5" cy="53.0" r="2.9" fill="url(#gb)" stroke="#a8a8a8" stroke-width="0.500"/><circle cx="400.500" cy="60.900" r="9.300" fill="none" stroke="#9c9c9c" stroke-width="0.800" transform="translate(0.700,0.900)"/><path d="M391.200 60.700a9.300 9.300 0 1 0 18.600 0a9.300 9.300 0 1 0 -18.600 0" fill="none" stroke="#b9b9b9" stroke-width="2.6" stroke-linecap="round" stroke-linejoin="round" transform="translate(0.700,0.900)"/><path d="M391.200 60.700a9.300 9.300 0 1 0 18.600 0a9.300 9.300 0 1 0 -18.600 0" fill="none" stroke="#a9a9a9" stroke-width="3.2" stroke-linecap="round" stroke-linejoin="round"/><path d="M391.200 60.700a9.300 9.300 0 1 0 18.600 0a9.300 9.300 0 1 0 -18.600 0" fill="none" stroke="#f6f6f6" stroke-width="1.8" stroke-linecap="round" stroke-linejoin="round"/><circle cx="401.3" cy="61.7" r="2.7" fill="#a6a6a6"/><circle cx="400.5" cy="60.7" r="2.7" fill="url(#gb)" stroke="#a8a8a8" stroke-width="0.500"/><circle cx="410.6" cy="61.5" r="2.8" fill="#a6a6a6"/><circle cx="409.8" cy="60.5" r="2.8" fill="url(#gb)" stroke="#a8a8a8" stroke-width="0.500"/><path d="M430 53Q442 54 445 67.500" fill="none" stroke="#b9b9b9" stroke-width="2.2" stroke-linecap="round" stroke-linejoin="round" transform="translate(0.700,0.900)"/><path d="M430 53Q442 54 445 67.500" fill="none" stroke="#a9a9a9" stroke-width="2.8" stroke-linecap="round" stroke-linejoin="round"/><path d="M430 53Q442 54 445 67.500" fill="none" stroke="#f6f6f6" stroke-width="1.4" stroke-linecap="round" stroke-linejoin="round"/><circle cx="430.8" cy="54.0" r="2.9" fill="#a6a6a6"/><circle cx="430.0" cy="53.0" r="2.9" fill="url(#gb)" stroke="#a8a8a8" stroke-width="0.500"/><circle cx="430.3" cy="68.5" r="2.9" fill="#a6a6a6"/><circle cx="429.5" cy="67.5" r="2.9" fill="url(#gb)" stroke="#a8a8a8" stroke-width="0.500"/><circle cx="445.8" cy="68.5" r="2.9" fill="#a6a6a6"/><circle cx="445.0" cy="67.5" r="2.9" fill="url(#gb)" stroke="#a8a8a8" stroke-width="0.500"/><path d="M464 62.300a10 5 -8 1 0 20 -1.600a10 5 -8 1 0 -20 1.600" fill="none" stroke="#b9b9b9" stroke-width="2.2" stroke-linecap="round" stroke-linejoin="round" transform="translate(0.700,0.900)"/><path d="M464 62.300a10 5 -8 1 0 20 -1.600a10 5 -8 1 0 -20 1.600" fill="none" stroke="#a9a9a9" stroke-width="2.8" stroke-linecap="round" stroke-linejoin="round"/><path d="M464 62.300a10 5 -8 1 0 20 -1.600a10 5 -8 1 0 -20 1.600" fill="none" stroke="#f6f6f6" stroke-width="1.4" stroke-linecap="round" stroke-linejoin="round"/><circle cx="484.1" cy="55.3" r="2.7" fill="#a6a6a6"/><circle cx="483.3" cy="54.3" r="2.7" fill="url(#gb)" stroke="#a8a8a8" stroke-width="0.500"/><circle cx="465.3" cy="68.6" r="2.7" fill="#a6a6a6"/><circle cx="464.5" cy="67.6" r="2.7" fill="url(#gb)" stroke="#a8a8a8" stroke-width="0.500"/><path d="M500.500 53.500L512 51L519.500 61L511 69.500L501.500 65.500Z" fill="none" stroke="#b9b9b9" stroke-width="2.6" stroke-linecap="round" stroke-linejoin="round" transform="translate(0.700,0.900)"/><path d="M500.500 53.500L512 51L519.500 61L511 69.500L501.500 65.500Z" fill="none" stroke="#a9a9a9" stroke-width="3.2" stroke-linecap="round" stroke-linejoin="round"/><path d="M500.500 53.500L512 51L519.500 61L511 69.500L501.500 65.500Z" fill="none" stroke="#f6f6f6" stroke-width="1.8" stroke-linecap="round" stroke-linejoin="round"/><circle cx="509.8" cy="61.5" r="2.8" fill="#a6a6a6"/><circle cx="509.0" cy="60.5" r="2.8" fill="url(#gb)" stroke="#a8a8a8" stroke-width="0.500"/><circle cx="518.0" cy="62.0" r="2.8" fill="#a6a6a6"/><circle cx="517.2" cy="61.0" r="2.8" fill="url(#gb)" stroke="#a8a8a8" stroke-width="0.500"/><path d="M537 53.500H553.500V67H537Z" fill="none" stroke="#b9b9b9" stroke-width="2.6" stroke-linecap="round" stroke-linejoin="round" transform="translate(0.700,0.900)"/><path d="M537 53.500H553.500V67H537Z" fill="none" stroke="#a9a9a9" stroke-width="3.2" stroke-linecap="round" stroke-linejoin="round"/><path d="M537 53.500H553.500V67H537Z" fill="none" stroke="#f6f6f6" stroke-width="1.8" stroke-linecap="round" stroke-linejoin="round"/><circle cx="554.3" cy="54.5" r="2.8" fill="#a6a6a6"/><circle cx="553.5" cy="53.5" r="2.8" fill="url(#gb)" stroke="#a8a8a8" stroke-width="0.500"/><circle cx="537.8" cy="68.2" r="2.8" fill="#a6a6a6"/><circle cx="537.0" cy="67.2" r="2.8" fill="url(#gb)" stroke="#a8a8a8" stroke-width="0.500"/><g font-family="Liberation Sans" font-weight="bold" font-style="italic" font-size="23.500"><text x="571.300" y="70.200" fill="#8a8a8a" textLength="21.500" lengthAdjust="spacingAndGlyphs">A</text><text x="570.300" y="69.300" fill="#d2d2d2" stroke="#a0a0a0" stroke-width="0.800" textLength="21.500" lengthAdjust="spacingAndGlyphs">A</text></g><path d="M610.500 60v9M625.500 60v9" stroke="#b0b0b0" stroke-width="2.600"/><path d="M610.500 60v9M625.500 60v9" stroke="#eeeeee" stroke-width="1.100"/><path d="M609 60h18" stroke="#7c7c7c" stroke-width="1.300"/><circle cx="610.300" cy="59.800" r="1.600" fill="#555"/><circle cx="625.700" cy="59.800" r="1.600" fill="#555"/><circle cx="611.1" cy="70.3" r="2.5" fill="#a6a6a6"/><circle cx="610.3" cy="69.3" r="2.5" fill="url(#gb)" stroke="#a8a8a8" stroke-width="0.500"/><circle cx="626.5" cy="70.3" r="2.5" fill="#a6a6a6"/><circle cx="625.7" cy="69.3" r="2.5" fill="url(#gb)" stroke="#a8a8a8" stroke-width="0.500"/><circle cx="618.0" cy="60.0" r="2.3" fill="url(#gb)" stroke="#a8a8a8" stroke-width="0.500"/><text x="609.500" y="56" font-family="Liberation Sans" font-weight="bold" font-size="7.500" fill="#ffffff" stroke="#b4b4b4" stroke-width="0.500" paint-order="stroke">1,00</text><path d="M646.300 65.500C646 50 661.500 50 661.200 66" fill="none" stroke="#b9b9b9" stroke-width="2.2" stroke-linecap="round" stroke-linejoin="round" transform="translate(0.700,0.900)"/><path d="M646.300 65.500C646 50 661.500 50 661.200 66" fill="none" stroke="#a9a9a9" stroke-width="2.8" stroke-linecap="round" stroke-linejoin="round"/><path d="M646.300 65.500C646 50 661.500 50 661.200 66" fill="none" stroke="#f6f6f6" stroke-width="1.4" stroke-linecap="round" stroke-linejoin="round"/><circle cx="654.6" cy="55.3" r="2.7" fill="#a6a6a6"/><circle cx="653.8" cy="54.3" r="2.7" fill="url(#gb)" stroke="#a8a8a8" stroke-width="0.500"/><circle cx="647.1" cy="66.3" r="2.9" fill="#a6a6a6"/><circle cx="646.3" cy="65.3" r="2.9" fill="url(#gb)" stroke="#a8a8a8" stroke-width="0.500"/><circle cx="662.0" cy="67.2" r="2.9" fill="#a6a6a6"/><circle cx="661.2" cy="66.2" r="2.9" fill="url(#gb)" stroke="#a8a8a8" stroke-width="0.500"/><circle cx="689.500" cy="60.700" r="5.400" fill="url(#gb)" stroke="#a0a0a0" stroke-width="0.700"/><path d="M733.800 57.200C733.600 52.400 727 52.200 723 53C717.200 54.200 717.400 58.400 723 60C728.500 61.600 734.600 62.600 732.500 66.200C730.600 69.600 722 69.900 718.500 68.500C716.600 67.700 716.100 66.500 716.400 65.200" fill="none" stroke="#8c8c8c" stroke-width="2.600" stroke-linecap="round" transform="translate(0.500,0.700)"/><path d="M733.800 57.200C733.600 52.400 727 52.200 723 53C717.200 54.200 717.400 58.400 723 60C728.500 61.600 734.600 62.600 732.500 66.200C730.600 69.600 722 69.900 718.500 68.500C716.600 67.700 716.100 66.500 716.400 65.200" fill="none" stroke="#9e9e9e" stroke-width="2.600" stroke-linecap="round"/><path d="M733.800 57.200C733.600 52.400 727 52.200 723 53C717.200 54.200 717.400 58.400 723 60C728.500 61.600 734.600 62.600 732.500 66.200C730.600 69.600 722 69.900 718.500 68.500C716.600 67.700 716.100 66.500 716.400 65.200" fill="none" stroke="#d8d8d8" stroke-width="1.100" stroke-linecap="round" transform="translate(-0.200,-0.300)"/><path d="M750.300 57.300L752.600 57.800V72.200L750.300 71z" fill="#9a9a9a"/><path d="M750.300 57.300L762.800 49.500H773L772.400 50.700L763.600 50.900L752.600 57.900z" fill="#a4a4a4"/><path d="M752.600 57.800L763.600 50.800V69.200L760.200 72.300H752.600z" fill="url(#gfb)"/><defs><linearGradient id="gfb" x1="0" y1="0" x2="1" y2="0"><stop offset="0" stop-color="#c8c8c8"/><stop offset="1" stop-color="#d9d9d9"/></linearGradient></defs><path d="M764.600 50.500L772.600 50.400L764.600 55.600z" fill="#d6d6d6" stroke="#9c9c9c" stroke-width="0.600"/><path d="M764.900 60.600L772.500 56.300V64.300L764.900 68.600z" fill="#dadada" stroke="#9c9c9c" stroke-width="0.600"/><path d="M764.900 60.600L772.500 56.300V57.900L764.900 62.200z" fill="#9e9e9e"/><path d="M764.200 50V69.500" stroke="#8a8a8a" stroke-width="1.100"/><path d="M752.600 72.300H760.200L763.600 69.200" fill="none" stroke="#a0a0a0" stroke-width="0.600"/><path d="M790.500 66.500L792 52.500M806 66.500L804 52.500" stroke="#9a9a9a" stroke-width="0.800"/><path d="M790.500 66.500C791 52 805.500 52 806 66.500" fill="none" stroke="#b9b9b9" stroke-width="2.2" stroke-linecap="round" stroke-linejoin="round" transform="translate(0.700,0.900)"/><path d="M790.500 66.500C791 52 805.500 52 806 66.500" fill="none" stroke="#a9a9a9" stroke-width="2.8" stroke-linecap="round" stroke-linejoin="round"/><path d="M790.500 66.500C791 52 805.500 52 806 66.500" fill="none" stroke="#f6f6f6" stroke-width="1.4" stroke-linecap="round" stroke-linejoin="round"/><rect x="790.200" y="50.600" width="3.600" height="3.600" fill="#c4c4c4" stroke="#9a9a9a" stroke-width="0.600"/><rect x="802.200" y="50.600" width="3.600" height="3.600" fill="#c4c4c4" stroke="#9a9a9a" stroke-width="0.600"/><circle cx="791.5" cy="67.6" r="3.0" fill="#a6a6a6"/><circle cx="790.7" cy="66.6" r="3.0" fill="url(#gb)" stroke="#a8a8a8" stroke-width="0.500"/><circle cx="806.6" cy="67.6" r="3.0" fill="#a6a6a6"/><circle cx="805.8" cy="66.6" r="3.0" fill="url(#gb)" stroke="#a8a8a8" stroke-width="0.500"/></svg>
<div class="hd" style="left:822px;top:58px"></div><div class="hd" style="left:822px;top:59px;background:#fbfbfa"></div><div class="hd" style="left:822px;top:61px"></div><div class="hd" style="left:822px;top:62px;background:#fbfbfa"></div><div class="hd" style="left:822px;top:64px"></div><div class="hd" style="left:822px;top:65px;background:#fbfbfa"></div>
<svg width="1303" height="82" viewBox="0 0 1303 82" style="left:0px;top:0px"><g transform="translate(846.700,60.200)"><path d="M0 -10.700l4.700 4.900h-3.200v4.300h4.300v-3.200l4.900 4.700-4.900 4.700v-3.200h-4.300v4.300h3.200l-4.700 4.900-4.700-4.900h3.200v-4.300h-4.300v3.200l-4.900-4.700 4.900-4.700v3.200h4.300v-4.300h-3.200z" fill="#9b9b9b" stroke="#8a8a8a" stroke-width="0.600" stroke-linejoin="round"/></g><path d="M884.500 57.200c3 .8 4.800 3 4.800 5.400 0 3-2.700 5.200-6.200 5.200-3.200 0-5.600-1.800-6-4.600l-3.600.4c.6 4.500 4.500 7.600 9.600 7.600 5.600 0 9.900-3.700 9.900-8.600 0-3.800-2.500-7-6.600-8.400l1.500-3.600-8.200 1.800 3.600 7.300z" fill="#9d9d9d" stroke="#858585" stroke-width="0.700" stroke-linejoin="round"/><path d="M909.500 54l3.500-3.500h15v12.500c0 4.500-3 7.500-8 8l-1.500-2.800c4-.5 6-2.500 6-5.500v-8.700h-11.500z" fill="#9d9d9d" stroke="#858585" stroke-width="0.700" stroke-linejoin="round"/><path d="M913 59.500l2.500-3h6.500v5.500c0 3-1.500 4.800-4.500 5.200l-1-2.300c1.800-.4 2.700-1.300 2.700-3v-2.800h-3.800z" fill="#9d9d9d" stroke="#858585" stroke-width="0.600" stroke-linejoin="round"/><path d="M953.800 53h2.400v16.500h-2.400z" fill="#9d9d9d" stroke="#888" stroke-width="0.500"/><path d="M944.500 61l6.500-5v3.200h8v-3.200l6.500 5-6.500 5v-3.200h-8v3.200z" fill="#999" stroke="#858585" stroke-width="0.600" stroke-linejoin="round"/><path d="M992.300 51.500l9 10.500h-4.500v9h-9v-9h-4.500z" fill="#858585" transform="translate(-1.500,-1.500)" opacity="0"/><path d="M986.800 71.700h9.500v-9h4.500l-9.300-10.500" fill="#838383"/><path d="M990.800 50.200l9.500 10.500h-4.600v9h-9.500v-9h-4.600z" fill="url(#gd)" stroke="#8a8a8a" stroke-width="0.600" stroke-linejoin="round"/><path d="M1028 71.700l9.500-10.500h-3.500v-9h-2v9z" fill="#838383"/><path d="M1026.500 70.800l-9.500-10.500h4.600v-9.500h9.500v9.500h4.600z" fill="url(#gd)" stroke="#8a8a8a" stroke-width="0.600" stroke-linejoin="round"/><path d="M1053.500 60v-8.500h19v19h-8.500" fill="none" stroke="#8c8c8c" stroke-width="1.800" stroke-dasharray="2.600 1.700"/><rect x="1052.800" y="61.200" width="10" height="9.800" fill="#9a9a9a" stroke="#858585" stroke-width="0.700"/><rect x="1055.800" y="64.200" width="4" height="3.800" fill="#f0f0f0"/><path d="M1063 58.800l4-4.200-1.500-1.400 6-.7-.6 6-1.500-1.500-4.200 4.100z" fill="#8e8e8e" stroke="#7c7c7c" stroke-width="0.500"/><path d="M1101.500 50l7 16-17.500 4.500z" fill="#8f8f8f" stroke="#7a7a7a" stroke-width="0.700" stroke-linejoin="round"/><path d="M1092 70.800l17-4.500 .6 1.500-16 4.500z" fill="#7c7c7c"/><path d="M1088.500 54.500l5-4.500 8.500 10-5 4.500z" fill="#a8a8a8" stroke="#777" stroke-width="0.700"/><path d="M1090 53.300l8.500 10M1091.700 51.800l8.500 10" stroke="#868686" stroke-width="0.600"/><path d="M1097 64.500l5-4.500 1.800 6.500z" fill="#f4f4f4" stroke="#888" stroke-width="0.500"/><path d="M1102.300 64.300l1.500 2.200-2.500-.6z" fill="#555"/><path d="M1125 58.500l7.500-7 4.500 6 7.500-5.500" fill="none" stroke="#878787" stroke-width="3.700" stroke-linejoin="miter"/><path d="M1125 58.500l7.500-7 4.500 6 7.500-5.500" fill="none" stroke="#f8f8f8" stroke-width="1.700"/><path d="M1131 60h9l-4.500 5.500z" fill="#8a8a8a" stroke="#7a7a7a" stroke-width="0.500"/><path d="M1125 69c3.500-5 6.500-5 10-2s6.500 2.500 9.500-2.500" fill="none" stroke="#878787" stroke-width="3.700" stroke-linecap="butt"/><path d="M1125 69c3.500-5 6.500-5 10-2s6.500 2.500 9.500-2.500" fill="none" stroke="#f8f8f8" stroke-width="1.700"/><path d="M1169.500 52.500h3v3h3.200v3h-3.200v3h-3v-3h-3.200v-3h3.200z" fill="#8c8c8c" stroke="#7c7c7c" stroke-width="0.500"/><path d="M1160.500 67h21.500" stroke="#a6a6a6" stroke-width="3"/><path d="M1161 66.700h20.500" stroke="#d9d9d9" stroke-width="1.200"/><circle cx="1171" cy="66.600" r="2.800" fill="url(#gb)" stroke="#979797" stroke-width="0.600"/><rect x="1202.300" y="53.800" width="9.500" height="3" fill="#8c8c8c" stroke="#7c7c7c" stroke-width="0.500"/><path d="M1196.500 66h21.500" stroke="#a6a6a6" stroke-width="3"/><path d="M1197 65.700h20.500" stroke="#ececec" stroke-width="1.300"/><circle cx="1207" cy="65.400" r="2.800" fill="url(#gb)" stroke="#979797" stroke-width="0.600"/><path d="M1232.300 67.300l9.700-3.300 11.500 3-10.500 4.700z" fill="#ebebeb" stroke="#8a8a8a" stroke-width="1.500" stroke-linejoin="round"/><path d="M1236.500 63v4.500M1250 63.500v4" stroke="#8a8a8a" stroke-width="1.200"/><path d="M1232.500 54.500l9.500-5.300 11.500 4-10.500 5.500z" fill="#a2a2a2" stroke="#808080" stroke-width="0.600" stroke-linejoin="round"/><path d="M1232.500 54.500l10.500 4.200v6.800l-10.500-3.500z" fill="#858585" stroke="#7a7a7a" stroke-width="0.600" stroke-linejoin="round"/><path d="M1243 58.700l10.500-5.500v7l-10.500 5.300z" fill="#969696" stroke="#7a7a7a" stroke-width="0.600" stroke-linejoin="round"/><path d="M1290 58.800l3 2.700-3 2.700M1294.300 58.800l3 2.700-3 2.700" fill="none" stroke="#000" stroke-width="1.500"/></svg>
<div class="a" style="left:1282px;top:86px;width:1px;height:3px;background:#cfccc8"></div><div class="a" style="left:1285px;top:86px;width:1px;height:3px;background:#cfccc8"></div><div class="a" style="left:1288px;top:86px;width:1px;height:3px;background:#cfccc8"></div>
<div class="btnc" style="left:1274px;top:93px;width:24px;height:24px"></div>
<svg width="24" height="24" viewBox="0 0 24 24" style="left:1274px;top:93px"><path d="M9 11.800v-3a3.150 3.150 0 0 1 6.300 0v3" fill="none" stroke="#02332a" stroke-width="2.700"/><path d="M9 11.800v-3a3.150 3.150 0 0 1 6.300 0v3" fill="none" stroke="#2cbc98" stroke-width="1"/><defs><linearGradient id="glk" x1="0" y1="0" x2="1" y2="0"><stop offset="0" stop-color="#1aa886"/><stop offset="0.250" stop-color="#7adcc4"/><stop offset="0.550" stop-color="#14a07c"/><stop offset="1" stop-color="#0a8a6a"/></linearGradient></defs><rect x="7.300" y="11.800" width="9.700" height="6.900" fill="url(#glk)" stroke="#02332a" stroke-width="0.900"/><path d="M8 13.800h8.500M8 15.300h8.500M8 16.800h8.500" stroke="#0a7a60" stroke-width="0.500" opacity="0.700"/></svg>
<div class="btn" style="left:1274px;top:119px;width:24px;height:24px;border-color:#c2beb8;background:linear-gradient(#fbfbfa,#f3f2f1 60%,#ecebe9)"></div>
<svg width="24" height="24" viewBox="0 0 24 24" style="left:1274px;top:119px"><path d="M4.60 16.90L18.60 6.30" stroke="#02332a" stroke-width="3.4" fill="none"/><path d="M5.28 16.39L17.92 6.81" stroke="#10ac84" stroke-width="1.7" fill="none"/><circle cx="11.80" cy="12.00" r="4.10" fill="#02332a"/><circle cx="11.80" cy="12.00" r="3.25" fill="#10ac84"/><path d="M6 15.840L17.300 7.300" stroke="#10ac84" stroke-width="1.700"/></svg>
<div class="btn" style="left:1274px;top:145px;width:24px;height:24px;border-color:#c2beb8;background:linear-gradient(#fbfbfa,#f3f2f1 60%,#ecebe9)"></div>
<svg width="24" height="24" viewBox="0 0 24 24" style="left:1274px;top:145px"><path d="M4.900 17.050h14.800M12.150 4.500v12" stroke="#02332a" stroke-width="3.600" fill="none"/><path d="M5.750 17.050h13.100M12.150 5.350v12" stroke="#10ac84" stroke-width="1.900" fill="none"/></svg>
<div class="btnc" style="left:1274px;top:171px;width:24px;height:24px"></div>
<svg width="24" height="24" viewBox="0 0 24 24" style="left:1274px;top:171px"><path d="M8.400 4.100v15.800M15.900 4.100v15.800M4.300 8.200h15.700M4.300 16.100h15.700" stroke="#02332a" stroke-width="4" fill="none"/><path d="M8.400 4.950v14.100M15.900 4.950v14.100M5.150 8.200h14M5.150 16.100h14" stroke="#10ac84" stroke-width="2.300" fill="none"/></svg>
<div class="btn" style="left:1274px;top:197px;width:24px;height:24px;border-color:#c2beb8;background:linear-gradient(#fbfbfa,#f3f2f1 60%,#ecebe9)"></div>
<svg width="24" height="24" viewBox="0 0 24 24" style="left:1274px;top:197px"><path d="M6.100 6l11.600 11.700M17.700 6L6.100 17.700" stroke="#02332a" stroke-width="4.200" stroke-linecap="butt"/><path d="M6.700 6.600l10.400 10.500M17.100 6.600L6.700 17.100" stroke="#10ac84" stroke-width="2.500" stroke-linecap="butt"/></svg>
<div class="btn" style="left:1274px;top:223px;width:24px;height:24px;border-color:#c2beb8;background:linear-gradient(#fbfbfa,#f3f2f1 60%,#ecebe9)"></div>
<svg width="24" height="24" viewBox="0 0 24 24" style="left:1274px;top:223px"><path d="M8.40 6.00L18.90 12.40" stroke="#02332a" stroke-width="3.2" fill="none"/><path d="M9.13 6.44L18.17 11.96" stroke="#10ac84" stroke-width="1.5" fill="none"/><path d="M5.00 11.20L15.90 17.60" stroke="#02332a" stroke-width="3.2" fill="none"/><path d="M5.73 11.63L15.17 17.17" stroke="#10ac84" stroke-width="1.5" fill="none"/></svg>
<div class="btnc" style="left:1274px;top:249px;width:24px;height:24px"></div>
<svg width="24" height="24" viewBox="0 0 24 24" style="left:1274px;top:249px"><path d="M8.00 15.40L18.60 6.50" stroke="#02332a" stroke-width="3.3" fill="none"/><path d="M8.65 14.85L17.95 7.05" stroke="#10ac84" stroke-width="1.6" fill="none"/><circle cx="8.00" cy="15.40" r="3.70" fill="#02332a"/><circle cx="8.00" cy="15.40" r="2.85" fill="#10ac84"/><path d="M8 15.400L17 7.800" stroke="#10ac84" stroke-width="1.600"/></svg>
<div class="btn" style="left:1274px;top:275px;width:24px;height:24px;border-color:#c2beb8;background:linear-gradient(#fbfbfa,#f3f2f1 60%,#ecebe9)"></div>
<svg width="24" height="24" viewBox="0 0 24 24" style="left:1274px;top:275px"><path d="M11.800 6.600l5.200 5.200-5.200 5.200-5.200-5.200z" fill="none" stroke="#02332a" stroke-width="1"/><circle cx="11.80" cy="6.60" r="2.40" fill="#02332a"/><circle cx="11.80" cy="6.60" r="1.65" fill="#10ac84"/><circle cx="17.00" cy="11.80" r="2.40" fill="#02332a"/><circle cx="17.00" cy="11.80" r="1.65" fill="#10ac84"/><circle cx="11.80" cy="17.00" r="2.40" fill="#02332a"/><circle cx="11.80" cy="17.00" r="1.65" fill="#10ac84"/><circle cx="6.60" cy="11.80" r="2.40" fill="#02332a"/><circle cx="6.60" cy="11.80" r="1.65" fill="#10ac84"/></svg>
<div class="btnc" style="left:1274px;top:301px;width:24px;height:24px"></div>
<svg width="24" height="24" viewBox="0 0 24 24" style="left:1274px;top:301px"><circle cx="11.800" cy="11.700" r="5.800" fill="none" stroke="#02332a" stroke-width="2.900"/><circle cx="11.800" cy="11.700" r="5.800" fill="none" stroke="#10ac84" stroke-width="1.400"/><circle cx="11.800" cy="11.700" r="3" fill="none" stroke="#d4d2d0" stroke-width="1.200"/><circle cx="11.80" cy="11.70" r="2.30" fill="#02332a"/><circle cx="11.80" cy="11.70" r="1.40" fill="#10ac84"/></svg>
<div class="btn" style="left:1274px;top:327px;width:24px;height:24px;border-color:#c2beb8;background:linear-gradient(#fbfbfa,#f3f2f1 60%,#ecebe9)"></div>
<svg width="24" height="24" viewBox="0 0 24 24" style="left:1274px;top:327px"><circle cx="6.50" cy="12.00" r="2.50" fill="#02332a"/><circle cx="6.50" cy="12.00" r="1.70" fill="#10ac84"/><circle cx="11.80" cy="12.00" r="2.50" fill="#02332a"/><circle cx="11.80" cy="12.00" r="1.70" fill="#10ac84"/><circle cx="17.30" cy="12.00" r="2.50" fill="#02332a"/><circle cx="17.30" cy="12.00" r="1.70" fill="#10ac84"/></svg>
<div class="btn" style="left:1274px;top:353px;width:24px;height:24px;border-color:#c2beb8;background:linear-gradient(#fbfbfa,#f3f2f1 60%,#ecebe9)"></div>
<svg width="24" height="24" viewBox="0 0 24 24" style="left:1274px;top:353px"><path d="M5.80 10.90L16.30 17.70" stroke="#02332a" stroke-width="3.3" fill="none"/><path d="M6.51 11.36L15.59 17.24" stroke="#10ac84" stroke-width="1.6" fill="none"/><circle cx="14.80" cy="7.90" r="2.90" fill="#02332a"/><circle cx="14.80" cy="7.90" r="2.10" fill="#10ac84"/></svg>
<div class="btn" style="left:1274px;top:379px;width:24px;height:24px;border-color:#c2beb8;background:linear-gradient(#fbfbfa,#f3f2f1 60%,#ecebe9)"></div>
<svg width="24" height="24" viewBox="0 0 24 24" style="left:1274px;top:379px"><path d="M12.200 6.600v10M7.200 11.600h10" stroke="#02332a" stroke-width="3.200" stroke-linecap="round"/><path d="M12.200 6.900v9.400M7.500 11.600h9.400" stroke="#10ac84" stroke-width="1.600" stroke-linecap="round"/></svg>
<div class="btn" style="left:1274px;top:405px;width:24px;height:24px;border-color:#c2beb8;background:linear-gradient(#fbfbfa,#f3f2f1 60%,#ecebe9)"></div>
<svg width="24" height="24" viewBox="0 0 24 24" style="left:1274px;top:405px"><path d="M10.300 18.500v-8.700h8.300v2.800" fill="none" stroke="#0c7a60" stroke-width="1.300"/><path d="M5 17h8" stroke="#0c7a60" stroke-width="1.100"/><path d="M10.300 17l-1.200-2.500h2.400z M18.600 12.600l-1-2h2z" fill="#0c7a60"/><text x="10" y="8.600" font-size="4.800" font-family="Liberation Sans" font-weight="bold" fill="#0c6a54">1,00</text><text font-size="4.800" font-family="Liberation Sans" font-weight="bold" fill="#0c6a54" transform="translate(8.400,16) rotate(-90)">1,00</text></svg>
<div class="btnc" style="left:1274px;top:431px;width:24px;height:24px"></div>
<svg width="24" height="24" viewBox="0 0 24 24" style="left:1274px;top:431px"><rect x="5.700" y="5.700" width="12.600" height="12.500" fill="#12b58c" stroke="#02332a" stroke-width="1.100"/><circle cx="9.900" cy="14" r="1.700" fill="none" stroke="#02332a" stroke-width="0.900"/></svg>
<div class="a" style="left:279px;top:682px;width:156px;height:33px;box-sizing:border-box;border:1px solid #bdb9b3;border-top:none;border-radius:0 0 5px 5px;background:linear-gradient(#f4f3f2,#fafafa 70%,#ffffff)"></div>
<div class="a" style="left:0;top:715px;width:1301px;height:1px;background:#dcdad7"></div>
<svg width="16" height="16" viewBox="0 0 16 16" style="left:286px;top:690px"><path d="M1.500 1.500h7v3h-3.800v3h3v3h-3v4h-3.200z" fill="#e02818" stroke="#a01808" stroke-width="0.400"/><g transform="translate(10,9.600) scale(0.820)"><path d="M-1-5.200h2l.4 1.400 1.200.5 1.300-.7 1.400 1.400-.7 1.300.5 1.200 1.400.4v2l-1.400.4-.5 1.200.7 1.300-1.400 1.400-1.300-.7-1.200.5-.4 1.400h-2l-.4-1.400-1.200-.5-1.300.7-1.400-1.400.7-1.300-.5-1.200-1.400-.4v-2l1.400-.4.5-1.200-.7-1.300 1.400-1.400 1.300.7 1.200-.5z" fill="#1a3ea8" stroke="#0c2470" stroke-width="0.400"/><circle r="1.700" fill="#fff"/></g></svg>
<span class="t" style="left:310.20px;top:688.78px;font-size:14.50px;line-height:20px;letter-spacing:-0.199px;color:#3c3c3c;">Unnamed1 : 1</span>
<svg width="14" height="14" viewBox="0 0 14 14" style="left:410px;top:692px"><path d="M2.300 2.300l9.400 9.400M11.700 2.300l-9.400 9.400" stroke="#5c5a56" stroke-width="3"/></svg>
<span class="t" style="left:1175.90px;top:720.88px;font-size:14.50px;line-height:20px;letter-spacing:-0.090px;color:#3c3c3c;">137.32 x 83.20 mm</span>
</div></body></html>
